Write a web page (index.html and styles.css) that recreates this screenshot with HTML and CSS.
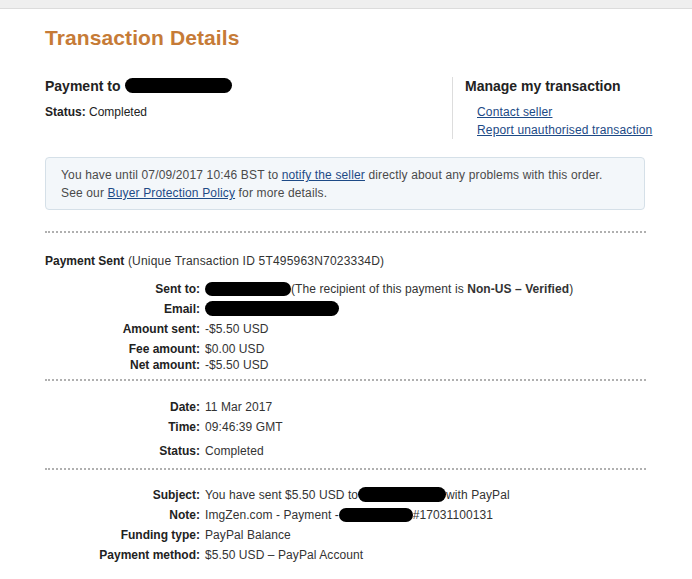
FILE: index.html
```html
<!DOCTYPE html>
<html lang="en">
<head>
<meta charset="utf-8">
<title>Transaction Details</title>
<link rel="stylesheet" href="styles.css">
</head>
<body>
<div class="topbar"></div>
<main class="page">
  <h1 class="title">Transaction Details</h1>

  <section class="header">
    <div class="summary">
      <h2 class="payee">Payment to <span class="redact redact-payee"></span></h2>
      <p class="status"><b>Status:</b> Completed</p>
    </div>
    <aside class="manage">
      <h2 class="manage-title">Manage my transaction</h2>
      <ul class="manage-links">
        <li><a href="#">Contact seller</a></li>
        <li><a href="#">Report unauthorised transaction</a></li>
      </ul>
    </aside>
  </section>

  <div class="notice">
    <p>You have until 07/09/2017 10:46 BST to <a href="#">notify the seller</a> directly about any problems with this order.</p>
    <p>See our <a href="#">Buyer Protection Policy</a> for more details.</p>
  </div>

  <hr class="dots dots-first">

  <p class="sent-head"><b>Payment Sent</b> (Unique Transaction ID 5T495963N7023334D)</p>

  <dl class="details details-pay">
    <dt>Sent to:</dt>
    <dd><span class="redact redact-sent"></span>(The recipient of this payment is <b>Non-US – Verified</b>)</dd>
    <dt>Email:</dt>
    <dd><span class="redact redact-email"></span></dd>
    <dt>Amount sent:</dt>
    <dd>-$5.50 USD</dd>
    <dt>Fee amount:</dt>
    <dd>$0.00 USD</dd>
    <dt class="tight">Net amount:</dt>
    <dd class="tight">-$5.50 USD</dd>
  </dl>

  <hr class="dots dots-second">

  <dl class="details details-time">
    <dt>Date:</dt>
    <dd>11 Mar 2017</dd>
    <dt>Time:</dt>
    <dd>09:46:39 GMT</dd>
    <dt class="loose">Status:</dt>
    <dd class="loose">Completed</dd>
  </dl>

  <hr class="dots dots-third">

  <dl class="details details-info">
    <dt>Subject:</dt>
    <dd>You have sent $5.50 USD to<span class="redact redact-subject"></span>with PayPal</dd>
    <dt>Note:</dt>
    <dd>ImgZen.com - Payment -<span class="redact redact-note"></span>#17031100131</dd>
    <dt>Funding type:</dt>
    <dd>PayPal Balance</dd>
    <dt>Payment method:</dt>
    <dd>$5.50 USD – PayPal Account</dd>
  </dl>
</main>
</body>
</html>
```

FILE: styles.css
```css
* {
  box-sizing: border-box;
}

html, body {
  margin: 0;
  padding: 0;
  background: #ffffff;
  overflow: hidden;
}

body {
  font-family: "Liberation Sans", Arial, sans-serif;
  font-size: 12px;
  color: #333333;
}

.topbar {
  height: 9px;
  background: #efefef;
  border-bottom: 1px solid #dcdcdc;
}

.page {
  margin-left: 45px;
  width: 601px;
}

.title {
  margin: 17px 0 0;
  font-size: 21px;
  line-height: 24px;
  font-weight: bold;
  color: #c67b37;
  letter-spacing: 0.1px;
}

.header {
  display: flex;
  margin-top: 27px;
}

.summary {
  flex: 1;
}

.payee,
.manage-title {
  margin: 0;
  font-size: 14px;
  line-height: 18px;
  font-weight: bold;
  color: #222222;
  white-space: nowrap;
}

.status {
  margin: 8px 0 0;
  line-height: 18px;
  color: #222222;
}

.manage {
  width: 194px;
  border-left: 1px solid #dddddd;
  padding-left: 12px;
}

.manage-links {
  list-style: none;
  margin: 8px 0 0;
  padding: 0 0 0 12px;
}

.manage-links li {
  line-height: 18px;
  white-space: nowrap;
  letter-spacing: 0.15px;
}

a {
  color: #1d4a86;
  text-decoration: underline;
}

.redact {
  display: inline-block;
  background: #000000;
  border-radius: 8px;
  vertical-align: middle;
}

.redact-payee {
  width: 107px;
  height: 15px;
  margin-left: 1px;
  margin-top: -3px;
}

.notice {
  margin-top: 18px;
  width: 600px;
  background: #f3f7fa;
  border: 1px solid #d5e0e8;
  border-radius: 4px;
  padding: 8px 15px 7px;
  color: #4a4a4a;
  letter-spacing: 0.15px;
}

.notice p {
  margin: 0;
  line-height: 18px;
}

.dots {
  margin: 0;
  border: 0;
  height: 0;
  border-top: 2px dotted #b0b0b0;
}

.dots-first {
  margin-top: 21px;
}

.sent-head {
  margin: 18px 0 0;
  line-height: 20px;
  color: #333333;
  letter-spacing: 0.2px;
}

.sent-head b {
  color: #222222;
  letter-spacing: 0;
}

.details {
  display: grid;
  grid-template-columns: 155px 1fr;
  column-gap: 5px;
  margin: 0;
  line-height: 20px;
}

.details dt {
  text-align: right;
  font-weight: bold;
  color: #222222;
}

.details dd {
  margin: 0;
  color: #333333;
  white-space: nowrap;
  letter-spacing: 0.08px;
}

.details .tight {
  margin-top: -4px;
}

.details .loose {
  margin-top: 4px;
}

.details-pay {
  margin-top: 8px;
}

.dots-second {
  margin-top: 4px;
}

.details-time {
  margin-top: 16px;
}

.dots-third {
  margin-top: 7px;
}

.details-info {
  margin-top: 15px;
}

.redact-sent {
  width: 86px;
  height: 14px;
  margin-top: -2px;
}

.redact-email {
  width: 134px;
  height: 15px;
  margin-top: -2px;
}

.redact-subject {
  width: 88px;
  height: 15px;
  margin-top: -2px;
}

.redact-note {
  width: 74px;
  height: 14px;
  margin-top: -2px;
}
```
